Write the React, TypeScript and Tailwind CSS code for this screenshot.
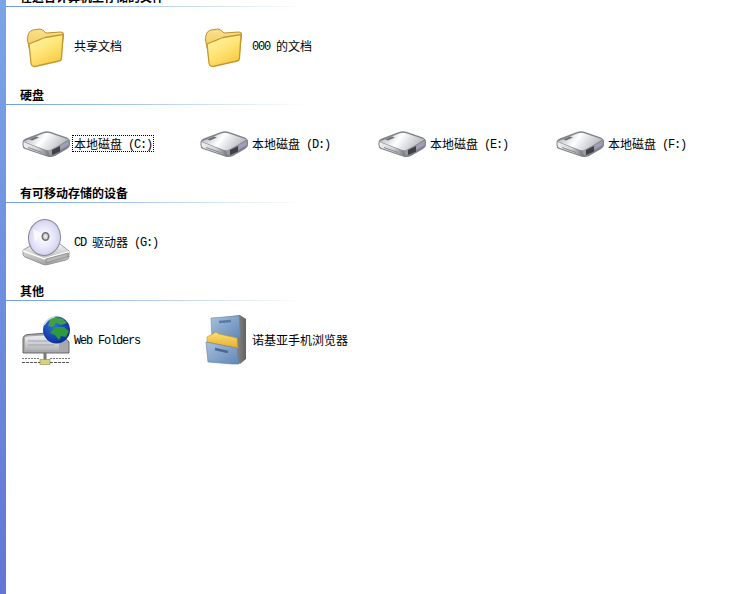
import React from "react";

const FONT = '"Noto Sans CJK SC", "Liberation Sans", sans-serif';

function Defs() {
  return (
    <svg width="0" height="0" className="absolute">
      <defs>
        <linearGradient id="fold" x1="0" y1="0" x2="0.6" y2="1">
          <stop offset="0" stopColor="#fff6b0" />
          <stop offset="0.55" stopColor="#ffe577" />
          <stop offset="1" stopColor="#f8cb45" />
        </linearGradient>
        <linearGradient id="foldBack" x1="0" y1="0" x2="0" y2="1">
          <stop offset="0" stopColor="#fbe08a" />
          <stop offset="1" stopColor="#e8b83e" />
        </linearGradient>
        <linearGradient id="driveTop" x1="0" y1="0" x2="1" y2="0.3">
          <stop offset="0" stopColor="#a7abb1" />
          <stop offset="0.5" stopColor="#ffffff" />
          <stop offset="1" stopColor="#b9bcc2" />
        </linearGradient>
        <linearGradient id="driveFront" x1="0" y1="0" x2="1" y2="0">
          <stop offset="0" stopColor="#f1f1f2" />
          <stop offset="0.6" stopColor="#cfd1d4" />
          <stop offset="1" stopColor="#84868c" />
        </linearGradient>
        <radialGradient id="disc" cx="0.48" cy="0.5" r="0.58">
          <stop offset="0" stopColor="#ffffff" />
          <stop offset="0.55" stopColor="#e6e6f8" />
          <stop offset="0.85" stopColor="#d2d2f2" />
          <stop offset="1" stopColor="#f4f4fc" />
        </radialGradient>
        <linearGradient id="base" x1="0" y1="0" x2="0" y2="1">
          <stop offset="0" stopColor="#f4f4f4" />
          <stop offset="1" stopColor="#a2a2a2" />
        </linearGradient>
        <linearGradient id="cab" x1="0" y1="0" x2="1" y2="1">
          <stop offset="0" stopColor="#a9c1de" />
          <stop offset="1" stopColor="#5f86b5" />
        </linearGradient>
        <linearGradient id="cabSide" x1="0" y1="0" x2="1" y2="0">
          <stop offset="0" stopColor="#ececec" />
          <stop offset="1" stopColor="#616161" />
        </linearGradient>
        <linearGradient id="cabFold" x1="0" y1="0" x2="0" y2="1">
          <stop offset="0" stopColor="#fbe178" />
          <stop offset="1" stopColor="#e6ab25" />
        </linearGradient>
        <radialGradient id="globe" cx="0.4" cy="0.35" r="0.7">
          <stop offset="0" stopColor="#2f6fe0" />
          <stop offset="1" stopColor="#0a2a90" />
        </radialGradient>
        <linearGradient id="box" x1="0" y1="0" x2="0" y2="1">
          <stop offset="0" stopColor="#f0f0f2" />
          <stop offset="1" stopColor="#b4b5b9" />
        </linearGradient>
      </defs>
    </svg>
  );
}

function Folder() {
  return (
    <svg width="48" height="48" viewBox="0 0 48 48" className="block shrink-0">
      <path d="M5.5 18 Q5.5 9 11 8 L18 7 Q21 7.5 24 11 L39 10 Q42 10 41.5 13 L39 36 L11 44 Z" fill="url(#foldBack)" stroke="#b9922c" strokeWidth="1" />
      <path d="M7 22 Q17 18 23 15.5 L41 12.5 L39.5 36 Q39.5 38.5 37 39 L13 44.5 Q9.5 44.8 9 41 Z" fill="url(#fold)" stroke="#c4982f" strokeWidth="1.3" />
    </svg>
  );
}

function Drive() {
  return (
    <svg width="48" height="48" viewBox="0 0 48 48" className="block shrink-0">
      <path d="M0.5 22 Q1 19.5 5 18 L21 12 Q25 10.5 29 12 L45 17.5 Q48 19 48 21 L48 25 Q48 27 45 29 L33 36 Q29 37.8 25 36.5 L3 29 Q0.5 28 0.5 25 Z" fill="#7f8288" />
      <path d="M1.5 21.5 L21 13.5 Q25 12 29 13.5 L46.5 19.5 L30 29.5 Q27 31 24 30 Z" fill="url(#driveTop)" />
      <path d="M7 19.5 L14 16.5 L17 17.5 L10 20.5 Z" fill="#6d7178" />
      <path d="M1.5 22 L25 31 L25 35.5 L3.5 28 Q1.5 27 1.5 25 Z" fill="url(#driveFront)" />
      <path d="M26 31 L47 20.5 L47 25 L28 35.5 Z" fill="#989aa0" />
      <path d="M30 30 L38 26 L38 31.5 L30 35 Z" fill="#3e4047" />
      <path d="M39 25.5 L46 21.5 L46 25 L39 29.5 Z" fill="#a09bc0" />
      <path d="M6 27.5 L20 32.5" stroke="#84878d" strokeWidth="1" />
    </svg>
  );
}

function Cd() {
  return (
    <svg width="48" height="48" viewBox="0 0 48 48" className="block shrink-0">
      <path d="M1 32 L12 26 L38 26 L47 33 L47 39 Q47 41 44 42 L26 46.5 Q23 47.5 20 46 L3 39 Q1 38 1 36 Z" fill="url(#base)" stroke="#85878a" strokeWidth="0.8" />
      <path d="M1 32 L22 40 L47 33 L47 34.5 L22 41.5 L1 33.5 Z" fill="#fff" />
      <path d="M24 41 L46 35 L46 38.5 L24 45 Z" fill="#b5b7b9" stroke="#777" strokeWidth="0.6" />
      <ellipse cx="22.5" cy="19.5" rx="16" ry="18" transform="rotate(8 22.5 19.5)" fill="url(#disc)" stroke="#85868f" strokeWidth="1" />
      <ellipse cx="23.5" cy="18.5" rx="3.2" ry="3.8" fill="#d5d5d8" stroke="#6f6f75" strokeWidth="1.6" />
      <circle cx="23.5" cy="18.5" r="1" fill="#fff" />
      <path d="M11 11 L20 16 L13 24 Z" fill="#fff" opacity="0.7" />
    </svg>
  );
}

function WebFolder() {
  return (
    <svg width="48" height="49" viewBox="0 0 48 49" className="block shrink-0">
      <path d="M1 23 Q1 19 6 18.5 L38 16 L47 26 L47 37 L1 37 Z" fill="#a8a9ac" stroke="#5e5e64" strokeWidth="0.9" />
      <path d="M3 22 Q3 20.5 6 20.5 L32 19 L37 25 L37 34 L3 34 Z" fill="url(#box)" />
      <path d="M6 25 L32 25 M6 29 L32 29" stroke="#9fa0a6" strokeWidth="1" />
      <circle cx="34.5" cy="14" r="13.5" fill="url(#globe)" />
      <path d="M28 3 Q34 -0.5 41 3 L45 7 L39 9 L34 7 L31 11 L26 10 Z" fill="#3ea148" />
      <path d="M33 11 L42 11 L47 15 L44 21 L39 20 L37 24 L33 19 L28 17 Z" fill="#2e9a3e" />
      <path d="M22 9 Q26 2 33 0.7" stroke="#c7d7e0" strokeWidth="1.6" fill="none" />
      <rect x="21.5" y="37" width="3" height="7" fill="#777" />
      <rect x="18" y="43.5" width="10" height="5" fill="#d9d27a" stroke="#888a55" strokeWidth="0.6" />
      <path d="M0 42.5 H18 M28 42.5 H48" stroke="#777" strokeWidth="1" strokeDasharray="2 1" />
      <path d="M0 46.5 H18 M28 46.5 H48" stroke="#555" strokeWidth="1" strokeDasharray="3 1" />
    </svg>
  );
}

function Cabinet() {
  return (
    <svg width="48" height="50" viewBox="0 0 48 50" className="block shrink-0">
      <g transform="translate(4 0)">
        <path d="M8 3 L36 0 L42 4 L42 44 L36 49 L30 44 Z" fill="url(#cabSide)" />
        <path d="M7 3 L35 1 L36 22 L8 24 Z" fill="url(#cab)" stroke="#6d8cb2" strokeWidth="0.6" />
        <path d="M15 7 L27 6" stroke="#5a7ba5" strokeWidth="2.5" />
        <path d="M3 22 L12 17 L15 19 L33 23 L34 34 L8 28 L3 28 Z" fill="url(#cabFold)" stroke="#c29427" strokeWidth="0.6" />
        <path d="M2 27 L33 33 L35 49 L28 49 L4 47 Z" fill="url(#cab)" stroke="#5d7da6" strokeWidth="0.6" />
        <path d="M11 34 L24 37" stroke="#49688f" strokeWidth="2.5" />
      </g>
    </svg>
  );
}

function Label({ parts, focused }: { parts: (string | [string])[]; focused?: boolean }) {
  return (
    <span
      className={`mb-px block h-[15px] whitespace-pre px-px text-[12px] leading-[15px] text-black ${focused ? "outline-1 outline-dotted outline-black" : ""}`}
    >
      {parts.map((p, i) =>
        typeof p === "string" ? (
          <span key={i}>{p}</span>
        ) : (
          <span key={i} className="align-[1px] font-['Liberation_Mono',monospace] text-[12px] tracking-[-1.2px]">{p[0]}</span>
        )
      )}
    </span>
  );
}

function Item({ icon, parts, focused }: { icon: React.ReactNode; parts: (string | [string])[]; focused?: boolean }) {
  return (
    <div className="flex h-12 w-[178px] items-center">
      <div className="flex h-12 w-[51px] shrink-0 items-center justify-start">{icon}</div>
      <Label parts={parts} focused={focused} />
    </div>
  );
}

function Section({ title, first, children }: { title: string; first?: boolean; children: React.ReactNode }) {
  return (
    <section className={`mb-[14px] ${first ? "-mt-[14px]" : ""}`}>
      <h2 className="ml-[14px] flex h-[20px] items-end pb-px text-[12px] font-bold leading-[17px] text-black">{title}</h2>
      <div className="h-px w-[300px] bg-linear-to-r from-[#6f9fda] to-white" />
      <div className="ml-[16px] mt-[15px] flex">{children}</div>
    </section>
  );
}

export default function App() {
  return (
    <div className="flex h-[594px] w-[746px] overflow-hidden bg-white" style={{ fontFamily: FONT }}>
      <Defs />
      <aside className="h-full w-[6px] shrink-0 bg-linear-to-b from-[#7ba5e7] to-[#6375d6]" />
      <main className="min-w-0 flex-1">
        <Section title="在这台计算机上存储的文件" first>
          <Item icon={<Folder />} parts={["共享文档"]} />
          <Item icon={<Folder />} parts={[["000 "], "的文档"]} />
        </Section>
        <Section title="硬盘">
          <Item icon={<Drive />} parts={["本地磁盘", [" (C:)"]]} focused />
          <Item icon={<Drive />} parts={["本地磁盘", [" (D:)"]]} />
          <Item icon={<Drive />} parts={["本地磁盘", [" (E:)"]]} />
          <Item icon={<Drive />} parts={["本地磁盘", [" (F:)"]]} />
        </Section>
        <Section title="有可移动存储的设备">
          <Item icon={<Cd />} parts={[["CD "], "驱动器", [" (G:)"]]} />
        </Section>
        <Section title="其他">
          <Item icon={<WebFolder />} parts={[["Web Folders"]]} />
          <Item icon={<Cabinet />} parts={["诺基亚手机浏览器"]} />
        </Section>
      </main>
    </div>
  );
}
